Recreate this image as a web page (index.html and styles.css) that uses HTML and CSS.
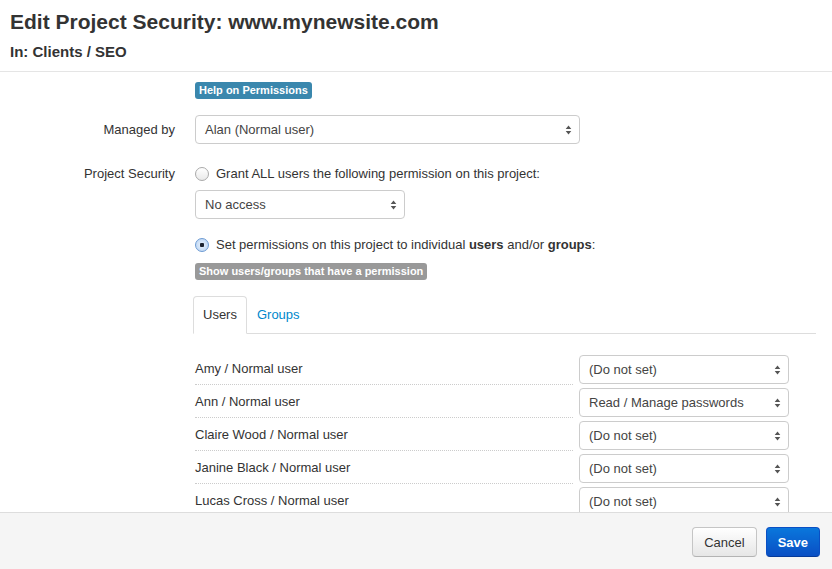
FILE: index.html
```html
<!DOCTYPE html>
<html lang="en">
<head>
  <meta charset="UTF-8" />
  <title>Edit Project Security</title>
  <link rel="stylesheet" href="styles.css">
</head>
<body>
  <div class="modal">
    <div class="modal-header">
      <h1>Edit Project Security: www.mynewsite.com</h1>
      <h2>In: Clients / SEO</h2>
    </div>

    <div class="modal-body">
      <!-- Help link -->
      <div class="form-row row-help">
        <div class="form-label"></div>
        <div class="form-controls">
          <span class="tag tag-info">Help on Permissions</span>
        </div>
      </div>

      <!-- Manager -->
      <div class="form-row row-managed">
        <div class="form-label">Managed by</div>
        <div class="form-controls">
          <div class="select select-wide">
            <span>Alan (Normal user)</span>
            <svg class="caret" width="7" height="10" viewBox="0 0 7 10"><path d="M3.5 0.5 L6.3 4 L0.7 4 Z M0.7 6 L6.3 6 L3.5 9.5 Z"/></svg>
          </div>
        </div>
      </div>

      <!-- Security -->
      <div class="form-row row-security">
        <div class="form-label">Project Security</div>
        <div class="form-controls">
          <div class="radio-line">
            <span class="radio"></span>
            <span>Grant ALL users the following permission on this project:</span>
          </div>
          <div class="select select-mid">
            <span>No access</span>
            <svg class="caret" width="7" height="10" viewBox="0 0 7 10"><path d="M3.5 0.5 L6.3 4 L0.7 4 Z M0.7 6 L6.3 6 L3.5 9.5 Z"/></svg>
          </div>

          <div class="radio-line radio-second">
            <span class="radio checked"></span>
            <span>Set permissions on this project to individual <b>users</b> and/or <b>groups</b>:</span>
          </div>
          <span class="tag tag-gray">Show users/groups that have a permission</span>

          <ul class="nav-tabs">
            <li class="active">Users</li>
            <li><a href="#">Groups</a></li>
          </ul>

          <div class="user-list">
            <div class="user-row">
              <div class="user-name">Amy / Normal user</div>
              <div class="select select-user"><span>(Do not set)</span><svg class="caret" width="7" height="10" viewBox="0 0 7 10"><path d="M3.5 0.5 L6.3 4 L0.7 4 Z M0.7 6 L6.3 6 L3.5 9.5 Z"/></svg></div>
            </div>
            <div class="user-row">
              <div class="user-name">Ann / Normal user</div>
              <div class="select select-user"><span>Read / Manage passwords</span><svg class="caret" width="7" height="10" viewBox="0 0 7 10"><path d="M3.5 0.5 L6.3 4 L0.7 4 Z M0.7 6 L6.3 6 L3.5 9.5 Z"/></svg></div>
            </div>
            <div class="user-row">
              <div class="user-name">Claire Wood / Normal user</div>
              <div class="select select-user"><span>(Do not set)</span><svg class="caret" width="7" height="10" viewBox="0 0 7 10"><path d="M3.5 0.5 L6.3 4 L0.7 4 Z M0.7 6 L6.3 6 L3.5 9.5 Z"/></svg></div>
            </div>
            <div class="user-row">
              <div class="user-name">Janine Black / Normal user</div>
              <div class="select select-user"><span>(Do not set)</span><svg class="caret" width="7" height="10" viewBox="0 0 7 10"><path d="M3.5 0.5 L6.3 4 L0.7 4 Z M0.7 6 L6.3 6 L3.5 9.5 Z"/></svg></div>
            </div>
            <div class="user-row">
              <div class="user-name">Lucas Cross / Normal user</div>
              <div class="select select-user"><span>(Do not set)</span><svg class="caret" width="7" height="10" viewBox="0 0 7 10"><path d="M3.5 0.5 L6.3 4 L0.7 4 Z M0.7 6 L6.3 6 L3.5 9.5 Z"/></svg></div>
            </div>
          </div>
        </div>
      </div>
    </div>

    <div class="modal-footer">
      <button class="btn">Cancel</button>
      <button class="btn btn-primary">Save</button>
    </div>
  </div>
</body>
</html>
```

FILE: styles.css
```css
/* BASE */
* {
  margin: 0;
  padding: 0;
  box-sizing: border-box;
}
body {
  font-family: "Liberation Sans", Arial, sans-serif;
  font-size: 13px;
  line-height: 20px;
  color: #333;
  background: #fff;
}
.modal {
  display: flex;
  flex-direction: column;
  height: 100vh;
}

/* HEADER */
.modal-header {
  padding: 10px 10px 9px;
  border-bottom: 1px solid #e5e5e5;
}
.modal-header h1 {
  font-size: 21px;
  line-height: 24px;
  font-weight: bold;
}
.modal-header h2 {
  margin-top: 8px;
  font-size: 15px;
  line-height: 20px;
  font-weight: bold;
}

/* BODY */
.modal-body {
  flex: 1;
  overflow: hidden;
  padding: 10px 16px 0 0;
}
.form-row {
  display: flex;
  align-items: flex-start;
}
.form-label {
  width: 175px;
  flex-shrink: 0;
  margin-right: 20px;
  text-align: right;
}
.form-controls {
  flex: 1;
  min-width: 0;
}
.row-help .form-controls {
  display: flex;
}
.row-managed {
  margin-top: 16px;
  align-items: center;
}
.row-security {
  margin-top: 20px;
}

/* Small labels */
.tag {
  display: inline-block;
  padding: 2px 4px;
  font-size: 11px;
  line-height: 13px;
  font-weight: bold;
  color: #fff;
  border-radius: 3px;
  vertical-align: top;
}
.tag-info {
  background: #3a87ad;
}
.tag-gray {
  margin-top: 8px;
  background: #999;
}

/* Fake select */
.select {
  display: flex;
  align-items: center;
  justify-content: space-between;
  height: 29px;
  padding: 0 7px 0 9px;
  background: #fff;
  border: 1px solid #ccc;
  border-radius: 4px;
  color: #444;
}
.select .caret {
  fill: #555;
  flex-shrink: 0;
}
.select-wide {
  width: 385px;
}
.select-mid {
  width: 210px;
  margin-top: 6px;
}
.select-user {
  width: 210px;
  flex-shrink: 0;
}

/* Radios */
.radio-line {
  display: flex;
  align-items: center;
  gap: 7px;
}
.radio-second {
  margin-top: 16px;
}
.radio {
  width: 14px;
  height: 14px;
  border-radius: 50%;
  border: 1px solid #a9a9a9;
  background: linear-gradient(#fff, #e9e9e9);
  flex-shrink: 0;
}
.radio.checked {
  border-color: #6d9bd3;
  background: radial-gradient(circle, #1d2430 0, #1d2430 2px, #dbe9f9 2.5px, #b4d0f2 100%);
}

/* Tabs */
.nav-tabs {
  list-style: none;
  display: flex;
  margin: 16px 0 0 -2px;
  border-bottom: 1px solid #ddd;
}
.nav-tabs li {
  padding: 8px 9px;
  margin-bottom: -1px;
  border: 1px solid transparent;
  border-radius: 4px 4px 0 0;
  line-height: 20px;
}
.nav-tabs li.active {
  border-color: #ddd #ddd transparent;
  background: #fff;
}
.nav-tabs a {
  color: #0088cc;
  text-decoration: none;
}

/* User permission list */
.user-list {
  width: 594px;
  margin-top: 18px;
}
.user-row {
  display: flex;
  gap: 6px;
  padding: 3px 0 1px;
}
.user-name {
  flex: 1;
  display: flex;
  align-items: center;
  padding-bottom: 2px;
  margin-bottom: -1px;
  border-bottom: 1px dotted #ccc;
}

/* FOOTER */
.modal-footer {
  display: flex;
  justify-content: flex-end;
  gap: 9px;
  height: 57px;
  padding: 14px 12px 0;
  background: #f5f5f5;
  border-top: 1px solid #ddd;
}
.btn {
  height: 30px;
  padding: 0 11px;
  font-family: inherit;
  font-size: 13px;
  color: #333;
  background: linear-gradient(#fff, #e6e6e6);
  border: 1px solid #c5c5c5;
  border-bottom-color: #b3b3b3;
  border-radius: 4px;
  cursor: pointer;
}
.btn-primary {
  color: #fff;
  font-weight: bold;
  background: linear-gradient(#0a77dc, #0a4fc4);
  border-color: #0a4fc4 #0a4fc4 #063a99;
}
```
